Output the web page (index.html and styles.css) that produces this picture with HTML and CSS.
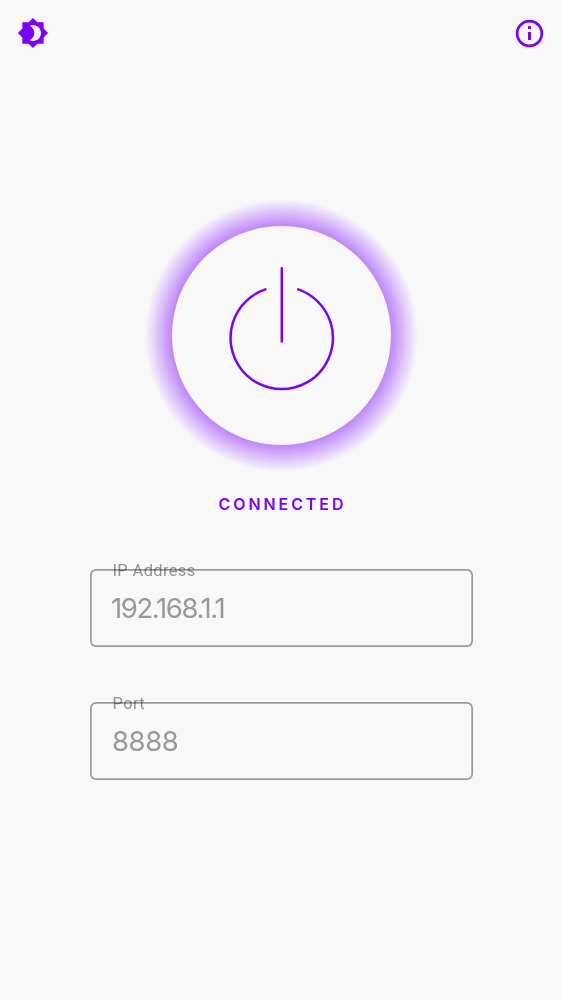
FILE: index.html
```html
<!DOCTYPE html>
<html lang="en">
<head>
<meta charset="utf-8">
<title>Connection</title>
<link rel="stylesheet" href="styles.css">
</head>
<body>
<header class="bar">
  <svg class="icon" viewBox="0 0 24 24"><path d="M20 8.69V4h-4.69L12 .69 8.69 4H4v4.69L.69 12 4 15.31V20h4.69L12 23.31 15.31 20H20v-4.69L23.31 12 20 8.69zM12 18c-.89 0-1.74-.2-2.5-.55C11.56 16.5 13 14.42 13 12s-1.44-4.5-3.5-5.45C10.26 6.2 11.11 6 12 6c3.31 0 6 2.69 6 6s-2.69 6-6 6z"/></svg>
  <svg class="icon icon-info" viewBox="0 0 24 24"><path d="M10.91 6.55h2.18v2.18h-2.18zm0 4.36h2.18v5.9h-2.18zM12 2C6.48 2 2 6.48 2 12s4.48 10 10 10 10-4.48 10-10S17.52 2 12 2zm0 18c-4.41 0-8-3.59-8-8s3.59-8 8-8 8 3.59 8 8-3.59 8-8 8z"/></svg>
</header>
<main class="content">
  <div class="halo">
    <button class="power" aria-label="Power">
      <svg class="power-icon" viewBox="0 0 110 130"><path d="M39.3 26.4A51.2 51.2 0 1 0 72.2 26.4M55.8 5.3V78.4"/></svg>
    </button>
  </div>
  <div class="status">CONNECTED</div>
  <div class="field"><span class="label">IP Address</span><span class="value value-ip">192.168.1.1</span></div>
  <div class="field"><span class="label">Port</span><span class="value">8888</span></div>
</main>
</body>
</html>
```
FILE: styles.css
```css
* { box-sizing: border-box; }
body { margin: 0; min-height: 1000px; background: #f8f8f8; font-family: Inter, sans-serif; }
.bar { display: flex; justify-content: space-between; padding: 17px 16px 0 17px; height: 66px; }
.icon { width: 32px; height: 32px; fill: #7b00ff; }
.icon-info { width: 33px; height: 33px; }
.content { display: flex; flex-direction: column; align-items: center; }
.halo {
  width: 275px; height: 275px; margin-top: 132px;
  display: flex; align-items: center; justify-content: center;
  border-radius: 50%;
  background: radial-gradient(circle closest-side, rgba(123,0,255,.47) 109px, rgba(123,0,255,0) 136.5px);
}
.power { width: 219px; height: 219px; padding: 0; border: 0; border-radius: 50%; background: #f8f8f8; }
.power-icon { display: block; width: 110px; height: 130px; margin: -16px auto 0; fill: none; stroke: #7b00ff; stroke-width: 2.5; stroke-linecap: round; }
.status { margin-top: 21px; height: 20px; font: 600 16px/20px Inter, sans-serif; letter-spacing: 2.9px; color: #7b00ff; padding-left: 3px; }
.field {
  position: relative; width: 383px; height: 78px; margin-top: 55px;
  padding: 21px 22px; margin-left: 1px;
  box-shadow: inset 0 0 0 1.7px #999; border-radius: 6px; color: #999;
}
.label { position: absolute; left: 22.5px; top: -8px; font: 400 16.5px/20px Roboto, sans-serif; letter-spacing: .35px; color: #999; mix-blend-mode: multiply; }
.value { display: block; font-size: 27.5px; font-weight: 370; line-height: 36px; letter-spacing: -.4px; }
.value-ip { letter-spacing: -1.4px; margin-left: -1px; }
```
